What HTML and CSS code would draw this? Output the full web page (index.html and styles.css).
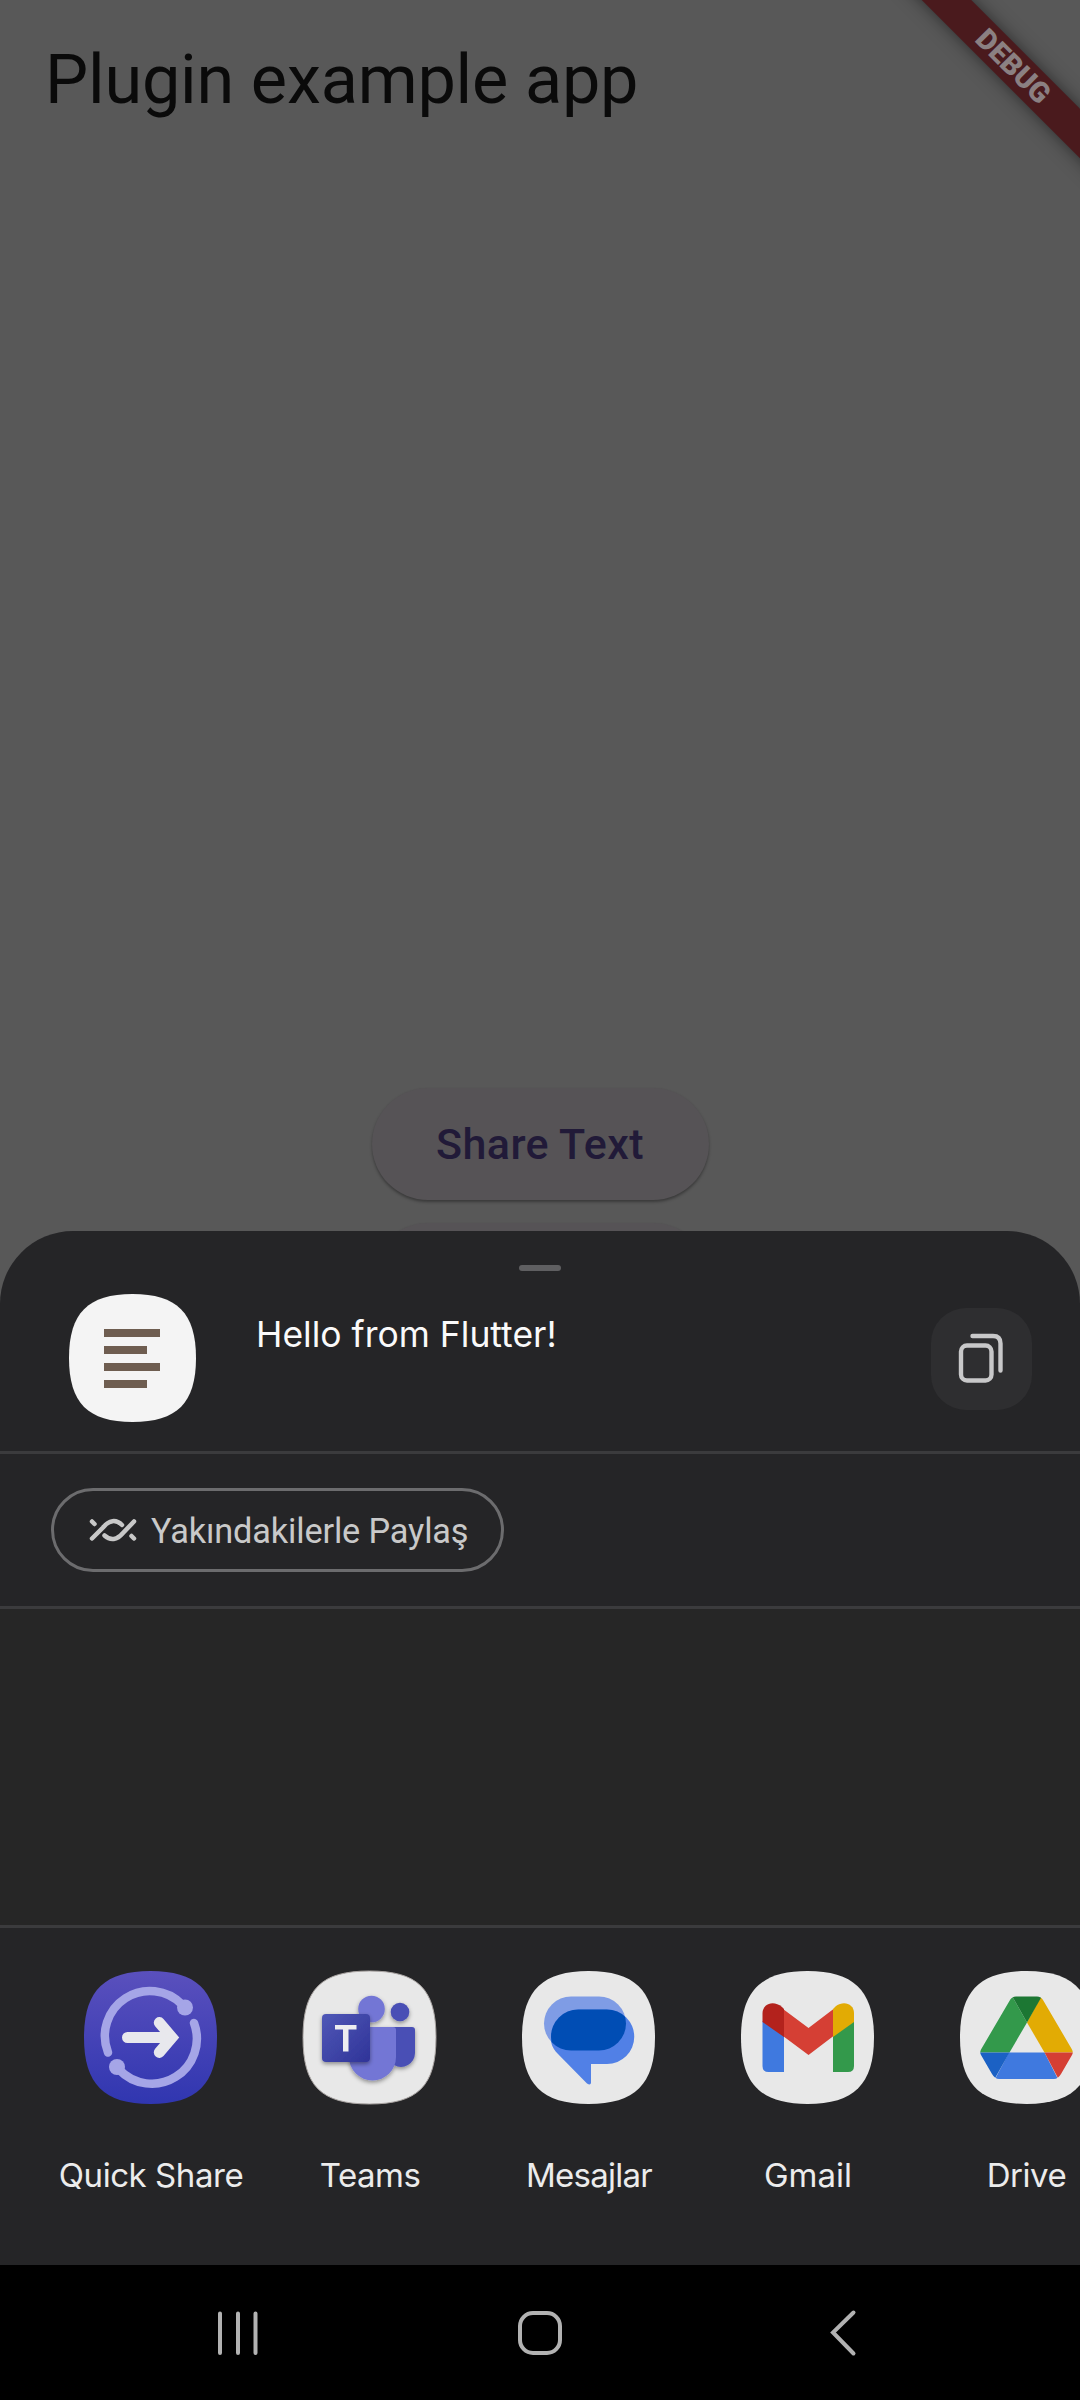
FILE: index.html
```html
<!DOCTYPE html>
<html lang="tr">
<head>
<meta charset="utf-8">
<title>Plugin example app</title>
<link rel="stylesheet" href="styles.css">
</head>
<body>
<main class="app">
  <h1 class="app-title">Plugin example app</h1>
  <div class="app-body">
    <button class="pill">Share Text</button>
    <button class="pill"></button>
  </div>
  <div class="debug-banner">DEBUG</div>
</main>
<section class="sheet">
  <div class="handle"></div>
  <header class="preview">
    <svg class="preview-icon" viewBox="0 0 127 128">
      <path fill="#f4f4f4" d="M0 64C0 19 19 0 63.500 0S127 19 127 64S108 128 63.500 128S0 109 0 64Z"/>
      <path fill="#6e5d50" d="M35 35h56v8H35zM35 52h43v8H35zM35 69h56v8H35zM35 86h43v8H35z"/>
    </svg>
    <p class="preview-text">Hello from Flutter!</p>
    <div class="copy">
      <svg width="101" height="102" viewBox="0 0 101 102" fill="none" stroke="#c8c8c9" stroke-width="4.400" stroke-linecap="round">
        <rect x="30" y="37.500" width="30.500" height="35" rx="6"/>
        <path d="M41.500 28H62Q69.500 28 69.500 35.500V62.500"/>
      </svg>
    </div>
  </header>
  <div class="chips">
    <div class="chip">
      <svg width="48" height="24" viewBox="0 0 48 24" fill="none" stroke="#c8c8c8" stroke-width="4.500" stroke-linecap="round">
        <path d="M3 3.500L5.500 6"/>
        <path d="M3 20.500L14 9.500C20 2 27 1 33 7"/>
        <path d="M15.500 17.500C21.500 23 28 22 34 15L45 3.500"/>
        <path d="M42.500 18L45 20.500"/>
      </svg>
      <span>Yakındakilerle Paylaş</span>
    </div>
  </div>
  <div class="targets"></div>
  <div class="apps">
    <div class="item">
      <svg class="icon" viewBox="0 0 133 133">
        <defs><linearGradient id="qs" x1="0" y1="0" x2="0" y2="1"><stop offset="0" stop-color="#5a50bd"/><stop offset="1" stop-color="#3036b0"/></linearGradient></defs>
        <path fill="url(#qs)" d="M0 66.500C0 20 20 0 66.500 0S133 20 133 66.500S113 133 66.500 133S0 113 0 66.500Z"/>
        <g fill="none" stroke="#a5a5e7" stroke-width="8.500" stroke-linecap="round">
          <path d="M24 81.500A45 45 0 0 1 98 33.500"/>
          <path d="M110 52A45 45 0 0 1 35 98.500"/>
        </g>
        <circle cx="101" cy="36.500" r="8" fill="#a5a5e7"/><circle cx="33" cy="96" r="8" fill="#a5a5e7"/>
        <path d="M43.500 66.500H84M75.300 51.600L88 66.500L75.300 81.400" fill="none" stroke="#e8e8ed" stroke-width="11" stroke-linecap="round"/>
      </svg>
      <span class="label-quick">Quick Share</span>
    </div>
    <div class="item">
      <svg class="icon" viewBox="0 0 133 133">
        <defs>
          <linearGradient id="tm" x1="0" y1="0" x2="1" y2="1"><stop offset="0" stop-color="#5058b7"/><stop offset="1" stop-color="#2f3398"/></linearGradient>
          <filter id="sh" x="-20%" y="-20%" width="140%" height="150%"><feDropShadow dx="0" dy="2" stdDeviation="2" flood-opacity=".4"/></filter>
        </defs>
        <path fill="#e8e8e8" stroke="#aaa5a3" stroke-width="1" d="M0 66.500C0 18 18 0 66.500 0S133 18 133 66.500S115 133 66.500 133S0 115 0 66.500Z"/>
        <g filter="url(#sh)">
          <circle cx="97" cy="41" r="9.300" fill="#4a50b5"/>
          <path fill="#4a50b5" d="M89 56H109Q112 56 112 59V82A14 14 0 0 1 91 94Z"/>
          <circle cx="68.500" cy="38" r="13.300" fill="#7376d5"/>
          <path fill="#7376d5" d="M46 56H90Q93 56 93 59V86A23.300 23.300 0 0 1 46 86Z"/>
        </g>
        <rect x="19" y="43" width="48" height="48" rx="4" fill="url(#tm)" filter="url(#sh)"/>
        <path fill="#ededf0" d="M32 54H53.500V58.500H45.500V80.500H40V58.500H32Z"/>
      </svg>
      <span class="label-teams">Teams</span>
    </div>
    <div class="item">
      <svg class="icon" viewBox="0 0 133 133">
        <defs><clipPath id="bub"><rect x="29" y="38.500" width="83" height="54.500" rx="27.250"/></clipPath></defs>
        <path fill="#e8e8e8" d="M0 66.500C0 20 20 0 66.500 0S133 20 133 66.500S113 133 66.500 133S0 113 0 66.500Z"/>
        <path fill="#7f9ce5" d="M49 25.500H77A27 27 0 0 1 77 79.500H49A27 27 0 0 1 49 25.500Z"/>
        <path fill="#5180e6" d="M56.500 38.500H85A27.250 27.250 0 0 1 85 93H69V112Q68.500 114.500 65 112.500L36 83C29 76 29 71 29 66A27.500 27.500 0 0 1 56.500 38.500Z"/>
        <rect x="22" y="25.500" width="82" height="54" rx="27" fill="#004db4" clip-path="url(#bub)"/>
      </svg>
      <span class="label-messages">Mesajlar</span>
    </div>
    <div class="item">
      <svg class="icon" viewBox="0 0 133 133">
        <path fill="#e8e8e8" d="M0 66.500C0 20 20 0 66.500 0S133 20 133 66.500S113 133 66.500 133S0 113 0 66.500Z"/>
        <path fill="#3f79df" d="M21.500 50L43 64V101H27.500Q21.500 101 21.500 95Z"/>
        <path fill="#33994b" d="M92 64L113 50V95Q113 101 107 101H92Z"/>
        <path fill="#d53f34" d="M42 38L67.500 57L92.500 38V65L67.500 84L42 65Z"/>
        <path fill="#b3221c" d="M21.500 51V42C22 32 33 29 41 36L43 38V66Z"/>
        <path fill="#e2ab04" d="M92 38L95 35C103 29 113 33 113 42V51L92 66Z"/>
      </svg>
      <span class="label-gmail">Gmail</span>
    </div>
    <div class="item">
      <svg class="icon" viewBox="0 0 133 133">
        <defs><clipPath id="dv"><path d="M56 25.500H77Q81 25.500 83 29L112 78.500Q113.500 81.500 112 84L101 103Q98 108 94 108H39Q35 108 32 103L21 84Q19.500 81.500 21 78.500L50 29Q52 25.500 56 25.500Z"/></clipPath></defs>
        <path fill="#e8e8e8" d="M0 66.500C0 20 20 0 66.500 0S133 20 133 66.500S113 133 66.500 133S0 113 0 66.500Z"/>
        <g clip-path="url(#dv)">
          <path fill="#33994b" d="M52 25L67 51.500L49.500 81.500H15Z"/>
          <path fill="#e2ab04" d="M81 25L67 51.500L84.500 81.500H120Z"/>
          <path fill="#1c7733" d="M52 25H82L67 51.500Z"/>
          <path fill="#3f79df" d="M49 81.500H84.500L99 110H34Z"/>
          <path fill="#1b61c4" d="M15 81.500H49.500L34 109Z"/>
          <path fill="#d53f34" d="M84.500 81.500H118L99 109Z"/>
        </g>
      </svg>
      <span class="label-drive">Drive</span>
    </div>
  </div>
</section>
<nav class="navbar">
  <svg width="1080" height="135" viewBox="0 0 1080 135" fill="none" stroke="#b2b2b2" stroke-width="4" stroke-linecap="round">
    <path d="M220 48.500V88M238 48.500V88M255.500 48.500V88"/>
    <rect x="520" y="48" width="40" height="40" rx="13"/>
    <path d="M853.500 47.500L833 67.500L853.500 88.500"/>
  </svg>
</nav>
</body>
</html>
```
FILE: styles.css
```css
* { box-sizing: border-box; margin: 0; padding: 0; }
body {
  width: 1080px; height: 2400px; overflow: hidden;
  display: flex; flex-direction: column;
  background: #585858;
  font-family: Roboto, "Liberation Sans", sans-serif;
}
.app { position: relative; height: 1231px; overflow: hidden; display: flex; flex-direction: column; }
.app-title { height: 160px; padding-left: 45px; line-height: 160px; font-size: 68.4px; letter-spacing: -0.2px; font-weight: 400; color: #0a0a0a; white-space: nowrap; }
.app-body { padding-top: 928px; display: flex; flex-direction: column; align-items: center; gap: 23px; }
.pill {
  width: 337px; height: 112px; flex: none; border: 0; border-radius: 56px;
  background: #565356; box-shadow: 0 2px 3px rgba(0,0,0,.35);
  font: 500 43px/112px Roboto, sans-serif; letter-spacing: .4px; color: #211a38; white-space: nowrap;
}
.debug-banner {
  position: absolute; left: 813px; top: 49px; width: 400px; height: 35px;
  transform: rotate(45deg); background: #4a1a1d; box-shadow: 0 0 17px rgba(0,0,0,.5);
  color: #8b8082; font-size: 28.7px; font-weight: 900; line-height: 35px; text-align: center;
}
.sheet {
  height: 1034px; background: #252527; border-radius: 73px 73px 0 0;
  display: flex; flex-direction: column;
}
.handle { width: 42px; height: 6px; margin: 34px auto 0; border-radius: 3px; background: #5f5f61; flex: none; }
.preview { height: 183px; padding: 23px 48px 0 69px; display: flex; border-bottom: 3px solid #3b3b3d; flex: none; }
.preview-icon { width: 127px; height: 128px; }
.preview-text { flex: 1; padding: 19px 0 0 60px; font: 400 35.5px/44px Inter, Roboto, sans-serif; color: #fafafa; white-space: nowrap; }
.copy { width: 101px; height: 102px; margin-top: 14px; border-radius: 35px; background: #2e2e30; }
.chips { height: 155px; padding: 34px 51px 0; border-bottom: 3px solid #3b3b3d; flex: none; }
.chip { width: 453px; height: 84px; padding-left: 35px; display: flex; align-items: center; gap: 14px; border: 3px solid #6c6c6e; border-radius: 42px; }
.chip span { padding-top: 2px; font-size: 34.3px; letter-spacing: -0.15px; color: #c9c9c9; white-space: nowrap; }
.targets { height: 319px; background: #262626; border-bottom: 3px solid #3b3b3d; flex: none; }
.apps { padding: 43px 0 0 41px; display: flex; overflow: hidden; }
.item { width: 219px; flex: none; display: flex; flex-direction: column; align-items: center; gap: 51px; }
.icon { width: 133px; height: 133px; overflow: visible; }
.item span { font: 400 33px/40px Inter, Roboto, sans-serif; color: #ececec; white-space: nowrap; }
.item .label-quick { letter-spacing: -0.45px; margin-left: 1px; }
.item .label-teams { letter-spacing: -0.5px; margin-left: 1px; }
.item .label-messages { letter-spacing: -0.75px; margin-left: 1px; }
.item .label-gmail { margin-left: 1px; }
.item .label-drive { letter-spacing: -0.5px; }
.navbar { height: 135px; background: #000; }
.navbar svg { display: block; }
```
